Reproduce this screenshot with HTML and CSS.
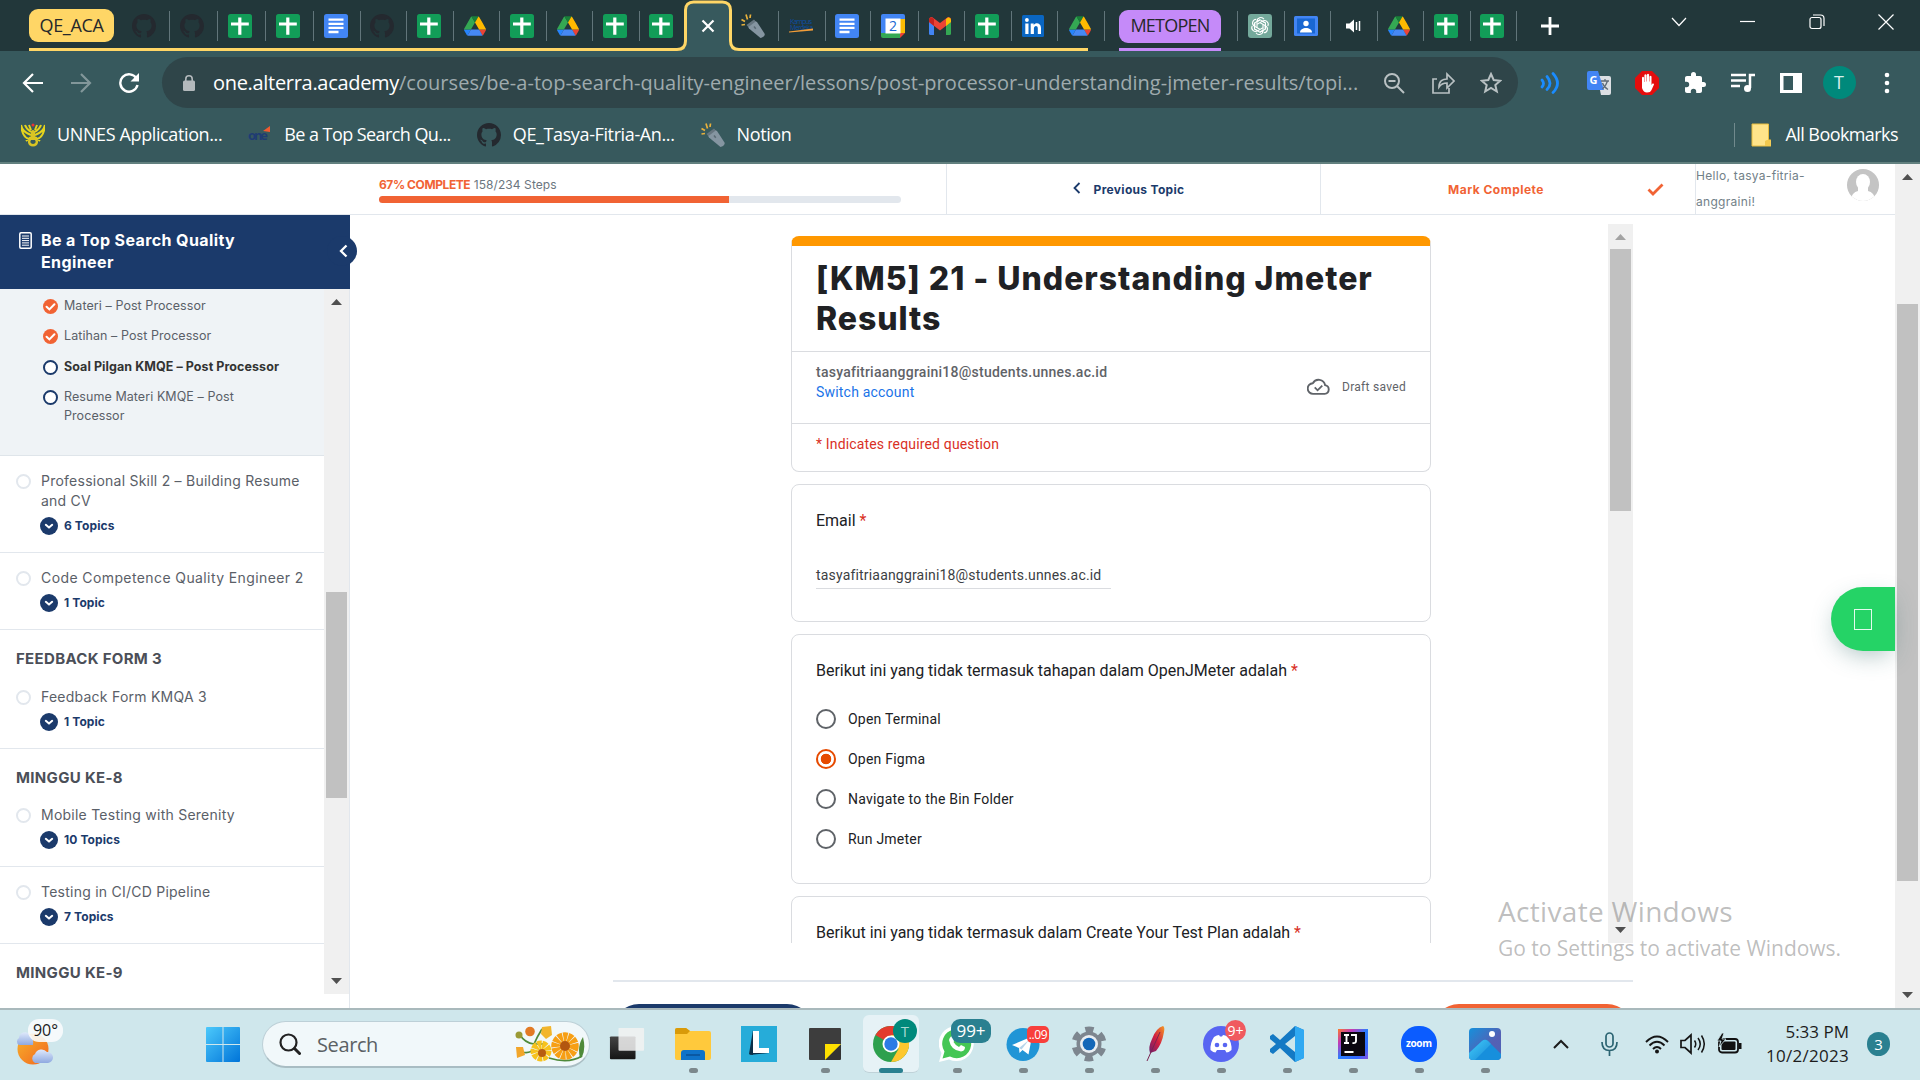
FILE: index.html
```html
<!DOCTYPE html>
<html lang="en">
<head>
<meta charset="utf-8">
<title>Be a Top Search Quality Engineer</title>
<link rel="stylesheet" href="styles.css">
</head>
<body>
<svg class="defs" aria-hidden="true">
  <symbol id="github" viewBox="0 0 16 16"><path fill="#24292f" d="M8 0C3.58 0 0 3.58 0 8c0 3.54 2.29 6.53 5.47 7.59.4.07.55-.17.55-.38 0-.19-.01-.82-.01-1.49-2.01.37-2.53-.49-2.69-.94-.09-.23-.48-.94-.82-1.13-.28-.15-.68-.52-.01-.53.63-.01 1.08.58 1.23.82.72 1.21 1.87.87 2.33.66.07-.52.28-.87.51-1.07-1.78-.2-3.64-.89-3.64-3.95 0-.87.31-1.59.82-2.15-.08-.2-.36-1.02.08-2.12 0 0 .67-.21 2.2.82.64-.18 1.32-.27 2-.27s1.36.09 2 .27c1.53-1.04 2.2-.82 2.2-.82.44 1.1.16 1.92.08 2.12.51.56.82 1.27.82 2.15 0 3.07-1.87 3.75-3.65 3.95.29.25.54.73.54 1.48 0 1.07-.01 1.93-.01 2.2 0 .21.15.46.55.38A8.01 8.01 0 0 0 16 8c0-4.42-3.58-8-8-8z"/></symbol>
  <symbol id="sheets" viewBox="0 0 24 24"><rect width="24" height="24" rx="2.500" fill="#129d58"/><path d="M10.200 3.500h3.200v5h7.400v3h-7.400v9.200h-3.200v-9.200H3v-3h7.200z" fill="#fff"/></symbol>
  <symbol id="docs" viewBox="0 0 24 24"><rect width="24" height="24" rx="2.500" fill="#4285f4"/><path d="M4.500 5.700h15M4.500 9.800h15M4.500 13.900h15M4.500 18h10" stroke="#fff" stroke-width="2.300"/></symbol>
  <symbol id="drive" viewBox="0 0 87.3 78"><path fill="#2684fc" d="M6.600 66.850l3.850 6.650c.8 1.400 1.950 2.500 3.300 3.300L27.500 53H0c0 1.550.4 3.100 1.200 4.500z"/><path fill="#34a853" d="M43.650 25L29.900 1.200c-1.350.8-2.500 1.900-3.300 3.300L1.200 48.500C.4 49.900 0 51.450 0 53h27.500z"/><path fill="#ea4335" d="M73.550 76.800c1.350-.8 2.500-1.900 3.300-3.300l1.600-2.750 7.650-13.250c.8-1.400 1.200-2.950 1.200-4.500H59.800l5.850 11.500z"/><path fill="#188038" d="M43.650 25L57.400 1.200C56.050.4 54.500 0 52.900 0H34.400c-1.600 0-3.150.45-4.500 1.200z"/><path fill="#4688f4" d="M59.800 53H27.500L13.750 76.800c1.350.8 2.900 1.200 4.500 1.200h50.800c1.600 0 3.150-.45 4.500-1.200z"/><path fill="#ffba00" d="M73.400 26.500l-12.700-22c-.8-1.400-1.950-2.500-3.300-3.300L43.650 25 59.800 53h27.450c0-1.550-.4-3.100-1.200-4.500z"/></symbol>
  <symbol id="torch" viewBox="0 0 24 24"><path d="M6.500 11.500L13 6.500l3 1.500 7.500 11.500c1 2-2 4.500-4 4.500L8 14.500z" fill="#8595a1"/><path d="M5.500 11L13 5.500l1.700 2L7.500 13z" fill="#66757f"/><path d="M13 12.500l1.800 2.300" stroke="#5b6b75" stroke-width="1.500"/><path d="M.5 5.500l3.500 2M5 .5l1.500 5M.5 11l3.500-.5M9.500.500L9 4" stroke="#e8b13c" stroke-width="1.700"/></symbol>
  <symbol id="check" viewBox="0 0 16 16"><circle cx="8" cy="8" r="8" fill="#f16334"/><path d="M3.800 8.300l3 2.800 5.400-5.400" fill="none" stroke="#fff" stroke-width="2.200" stroke-linecap="round"/></symbol>
  <symbol id="expand" viewBox="0 0 18 18"><circle cx="9" cy="9" r="9" fill="#1b3a6b"/><path d="M5.800 7.800L9 10.600l3.200-2.800" fill="none" stroke="#fff" stroke-width="2" stroke-linecap="round" stroke-linejoin="round"/></symbol>
  <symbol id="up" viewBox="0 0 11 6"><path d="M0 6L5.500 0 11 6z" fill="currentColor"/></symbol>
  <symbol id="down" viewBox="0 0 11 6"><path d="M0 0h11L5.500 6z" fill="currentColor"/></symbol>
</svg>

<div class="tabs">
  <div class="pill-cell"><span class="pill yellow">QE_ACA</span></div>
  <div class="tab"><svg class="i24"><use href="#github"/></svg></div>
  <div class="tab"><svg class="i24"><use href="#github"/></svg></div>
  <div class="tab"><svg class="i24"><use href="#sheets"/></svg></div>
  <div class="tab"><svg class="i24"><use href="#sheets"/></svg></div>
  <div class="tab"><svg class="i24"><use href="#docs"/></svg></div>
  <div class="tab"><svg class="i24"><use href="#github"/></svg></div>
  <div class="tab"><svg class="i24"><use href="#sheets"/></svg></div>
  <div class="tab"><svg class="i22"><use href="#drive"/></svg></div>
  <div class="tab"><svg class="i24"><use href="#sheets"/></svg></div>
  <div class="tab"><svg class="i22"><use href="#drive"/></svg></div>
  <div class="tab"><svg class="i24"><use href="#sheets"/></svg></div>
  <div class="tab plain"><svg class="i24"><use href="#sheets"/></svg></div>
  <div class="tab active">
    <svg class="outline" viewBox="0 0 69 51"><path d="M0 49.500h3c6 0 8.500-3 8.500-8.500V10c0-5 3-8 8-8h29c5 0 8 3 8 8v31c0 5.500 2.500 8.500 8.500 8.500h4V51H0z" fill="#37595d"/><path d="M0 49.500h3c6 0 8.500-3 8.500-8.500V10c0-5 3-8 8-8h29c5 0 8 3 8 8v31c0 5.500 2.500 8.500 8.500 8.500h4" fill="none" stroke="#ffd666" stroke-width="3"/><path d="M28.500 20.500l11 11M39.500 20.500l-11 11" stroke="#fff" stroke-width="2.200"/></svg>
  </div>
  <div class="tab"><svg class="i24"><use href="#torch"/></svg></div>
  <div class="tab"><svg class="i24" viewBox="0 0 24 24"><text x="1" y="10" font-size="7" textLength="22" fill="#0c4da2" class="brand">Kampus</text><text x="1" y="16" font-size="6.500" textLength="23" fill="#0c4da2" class="brand">Merdeka</text><path d="M0 17.500l24-3v2l-24 2z" fill="#f19c38"/></svg></div>
  <div class="tab"><svg class="i24"><use href="#docs"/></svg></div>
  <div class="tab"><svg class="i24" viewBox="0 0 24 24"><path d="M2 0h20q2 0 2 2v4H0V2q0-2 2-2z" fill="#4285f4"/><path d="M0 5h5v14H0z" fill="#4285f4"/><path d="M19 5h5v14h-5z" fill="#fbbc04"/><path d="M0 19h19v5H2q-2 0-2-2z" fill="#34a853"/><path d="M19 19h5l-5 5z" fill="#ea4335"/><path d="M4.500 4.500h15v15h-15z" fill="#fff"/><text x="12" y="17" font-size="14" text-anchor="middle" fill="#1a67d2" class="brand">2</text></svg></div>
  <div class="tab"><svg class="i22" viewBox="0 0 22 18"><path d="M0 3v13.500Q0 18 1.500 18H5V8z" fill="#4285f4"/><path d="M22 3v13.500q0 1.500-1.500 1.500H17V8z" fill="#34a853"/><path d="M0 3q0-3 3-3l8 6 8-6q3 0 3 3v2L11 13.500 0 5z" fill="#ea4335"/><path d="M0 3q0-3 3-2.500L5 2v7L0 5z" fill="#c5221f"/><path d="M22 3q0-3-3-2.500L17 2v7l5-4z" fill="#fbbc04"/></svg></div>
  <div class="tab"><svg class="i24"><use href="#sheets"/></svg></div>
  <div class="tab"><svg class="i22" viewBox="0 0 22 22"><rect width="22" height="22" rx="1.500" fill="#0a66c2"/><path d="M3.300 8.500h3.200V19H3.300zM8.700 8.500h3v1.400c2-2.800 7.300-2 7.300 3V19h-3.200v-5.500c0-3.500-3.900-3-3.900 0V19H8.700z" fill="#fff"/><circle cx="4.900" cy="5" r="1.900" fill="#fff"/></svg></div>
  <div class="tab"><svg class="i22"><use href="#drive"/></svg></div>
  <div class="tab pill-tab"><span class="pill purple">METOPEN</span></div>
  <div class="tab"><svg class="i24" viewBox="0 0 24 24"><rect width="24" height="24" rx="3" fill="#74a99b"/><g fill="none" stroke="#fff" stroke-width="1.100"><path id="petal" d="M9 13.500V7.500a3.800 3.800 0 0 1 7-2.200M9 7.800l3.200-2 5.300 3.100"/><use href="#petal" transform="rotate(60 12 12)"/><use href="#petal" transform="rotate(120 12 12)"/><use href="#petal" transform="rotate(180 12 12)"/><use href="#petal" transform="rotate(240 12 12)"/><use href="#petal" transform="rotate(300 12 12)"/></g></svg></div>
  <div class="tab"><svg class="i24" viewBox="0 0 24 24"><rect y="2" width="24" height="20" rx="1.500" fill="#4285f4"/><rect x="3" y="4.500" width="18" height="15" fill="#1967d2"/><circle cx="12" cy="9.500" r="2.700" fill="#fff"/><path d="M6 18.500c0-6 12-6 12 0z" fill="#fff"/></svg></div>
  <div class="tab"><svg class="i24" viewBox="0 0 24 24"><path d="M5 9.500h3.500L13 5.500v13l-4.500-4H5z" fill="#fff"/><path d="M15.500 8v8M18.500 7v10" stroke="#fff" stroke-width="1.500"/></svg></div>
  <div class="tab"><svg class="i22"><use href="#drive"/></svg></div>
  <div class="tab"><svg class="i24"><use href="#sheets"/></svg></div>
  <div class="tab"><svg class="i24"><use href="#sheets"/></svg></div>
  <div class="window-controls">
    <svg class="plus" viewBox="0 0 20 20"><path d="M10 1v18M1 10h18" stroke="#fff" stroke-width="2.800"/></svg>
    <svg viewBox="0 0 16 16"><path d="M1 4l7 7.500L15 4" fill="none" stroke="#fff" stroke-width="1.200"/></svg>
    <svg viewBox="0 0 16 16"><path d="M0 7.500h15" stroke="#fff" stroke-width="1.200"/></svg>
    <svg viewBox="0 0 16 16"><rect x="1" y="3.500" width="11" height="11" rx="2" fill="none" stroke="#fff" stroke-width="1.200"/><path d="M4 1h7.500c2 0 3.500 1.500 3.500 3.500V12" fill="none" stroke="#fff" stroke-width="1.200"/></svg>
    <svg viewBox="0 0 16 16"><path d="M.5.500l15 15M15.500.500l-15 15" stroke="#fff" stroke-width="1.200"/></svg>
  </div>
</div>

<div class="toolbar">
  <svg class="nav-icon" viewBox="0 0 22 22"><path d="M21 11H3M11 2l-9 9 9 9" fill="none" stroke="#fff" stroke-width="2.200"/></svg>
  <svg class="nav-icon" viewBox="0 0 22 22"><path d="M1 11h18M11 2l9 9-9 9" fill="none" stroke="#82979a" stroke-width="2.200"/></svg>
  <svg class="nav-icon" viewBox="0 0 22 22"><path d="M18.500 6.500A8.700 8.700 0 1 0 19.500 13" fill="none" stroke="#fff" stroke-width="2.400"/><path d="M21 1v8.500h-8.500z" fill="#fff"/></svg>
  <div class="omnibox">
    <svg class="lock" viewBox="0 0 12 16"><path d="M2.800 7V4a3.200 3.200 0 0 1 6.400 0v3" fill="none" stroke="#b4babd" stroke-width="1.600"/><rect y="5.500" width="12" height="10.500" rx="1.500" fill="#b4babd"/></svg>
    <span class="url"><span class="host">one.alterra.academy</span>/courses/be-a-top-search-quality-engineer/lessons/post-processor-understanding-jmeter-results/topi...</span>
    <svg class="i22" viewBox="0 0 22 22"><circle cx="9" cy="9" r="7" fill="none" stroke="#b9c1c3" stroke-width="2"/><path d="M14 14l7 7M5.500 9h7" stroke="#b9c1c3" stroke-width="2"/></svg>
    <svg class="i24" viewBox="0 0 24 24"><path d="M6 8H2v14h16v-5M8 16c0-6 4-8 8-8V3l7 7-7 7v-5c-4 0-6 1-8 4z" fill="none" stroke="#b9c1c3" stroke-width="1.700"/></svg>
    <svg class="i22" viewBox="0 0 22 22"><path d="M11 2l2.700 6 6.500.700-4.900 4.300 1.500 6.500L11 16l-5.800 3.500L6.700 13 1.800 8.700 8.300 8z" fill="none" stroke="#b9c1c3" stroke-width="2"/></svg>
  </div>
  <div class="extensions">
    <svg class="i24" viewBox="0 0 24 24"><path d="M3 9q3 3.500 0 7M8 5.500q6 7 0 13M14 2.500q9 10 0 19" fill="none" stroke="#1a8cff" stroke-width="2.700" stroke-linecap="round"/></svg>
    <svg class="i24" viewBox="0 0 24 24"><path d="M10 5h12q2 0 2 2v15q0 2-2 2h-8z" fill="#dcdfe3"/><path d="M2 0h9l6 19H2q-2 0-2-2V2q0-2 2-2z" fill="#4285f4"/><text x="2.500" y="13" font-size="11" font-weight="700" fill="#fff" class="brand">G</text><path d="M14 10h8M18 8v2M20.500 10c-1 4-3 6-5 8M15.500 12c1 3 3 5 5.500 6.500" stroke="#5f6b78" stroke-width="1.300" fill="none"/></svg>
    <svg class="i24" viewBox="0 0 24 24"><path d="M7 0h10l7 7v10l-7 7H7l-7-7V7z" fill="#e40d0d"/><path d="M7 13V6.500q1-1.500 2 0V11h.4V4q1-1.500 2.100 0v6.500h.4V3.500q1.100-1.500 2.200 0v7h.4V5.500q1-1.500 2 0V14l1-1.500q1.500-.5 1.500 1L16.500 19q-1 2.500-4.500 2.500T7 17z" fill="#fff"/></svg>
    <svg class="i24" viewBox="0 0 24 24"><path fill="#fff" d="M20.500 11H19V7c0-1.100-.9-2-2-2h-4V3.500a2.500 2.500 0 0 0-5 0V5H4c-1.100 0-2 .9-2 2v3.800h1.500a2.700 2.700 0 0 1 0 5.400H2V20c0 1.100.9 2 2 2h3.800v-1.500a2.700 2.700 0 0 1 5.400 0V22H17c1.100 0 2-.9 2-2v-4h1.500a2.500 2.500 0 0 0 0-5z"/></svg>
    <svg class="i24" viewBox="0 0 24 24"><path d="M0 4h15M0 9.500h15M0 15h9" stroke="#fff" stroke-width="2.300"/><path d="M24 4h-5v13" stroke="#fff" stroke-width="2.500" fill="none"/><circle cx="16.500" cy="17.500" r="3.500" fill="#fff"/></svg>
    <svg class="i24" viewBox="0 0 24 24"><path d="M1 2h22v20H1zM4.500 5v14H14V5z" fill="#fff" fill-rule="evenodd"/></svg>
    <span class="avatar">T</span>
    <svg class="i24" viewBox="0 0 24 24"><circle cx="12" cy="4" r="2.300" fill="#fff"/><circle cx="12" cy="12" r="2.300" fill="#fff"/><circle cx="12" cy="20" r="2.300" fill="#fff"/></svg>
  </div>
</div>

<div class="bookmarks">
  <svg class="i24" viewBox="0 0 24 24"><path d="M10 12C4 10 1 7 0 2c1 10 4 13 8 14M14 12c6-2 9-5 10-10-1 10-4 13-8 14M10 9C7 7 5 5 4 2M14 9c3-2 5-4 6-7M10 14l-5 4M14 14l5 4M10 7L8 2M14 7l2-5" fill="none" stroke="#e5d31c" stroke-width="2"/><path d="M10 8q2-2 4 0v6q5 3 2 8-4 3-8 0-3-5 2-8z" fill="#d9c424"/><path d="M10 17q-2 3 2 4 4-1 2-4z" fill="#37595d"/><circle cx="12" cy="2" r="1.500" fill="#e33"/></svg>
  <span class="bm">UNNES Application...</span>
  <svg class="i24 one" viewBox="0 0 24 24"><text x="0" y="16.500" font-size="13" font-weight="700" textLength="20" fill="#1f3c73" class="brand">one</text><path d="M15 8l7-5v6z" fill="#ef5b30"/></svg>
  <span class="bm tighter">Be a Top Search Qu...</span>
  <svg class="i24"><use href="#github"/></svg>
  <span class="bm">QE_Tasya-Fitria-An...</span>
  <svg class="i24"><use href="#torch"/></svg>
  <span class="bm">Notion</span>
  <div class="all">
    <svg viewBox="0 0 20 24"><path d="M1 1h16.500v16H20v6H1z" fill="#ffe48a" stroke="#e8bd3f"/><path d="M14 23v-5q3-2 5.500-1V23z" fill="#f3c94e"/></svg>
    <span class="bm tighter">All Bookmarks</span>
  </div>
</div>

<div class="page">
  <div class="site">
    <header class="topbar">
      <div class="progress">
        <div class="progress-text"><b>67% COMPLETE</b> <span>158/234 Steps</span></div>
        <div class="track"><div class="fill"></div></div>
      </div>
      <div class="prev"><svg viewBox="0 0 8 12"><path d="M6.500 1l-5 5 5 5" fill="none" stroke="#1b3a6b" stroke-width="1.800"/></svg><b>Previous Topic</b></div>
      <div class="mark"><b>Mark Complete</b><svg viewBox="0 0 17 13"><path d="M1.500 6.500l4.500 4.500L15.500 1.500" fill="none" stroke="#f16334" stroke-width="2.800"/></svg></div>
      <div class="user"><span class="hello">Hello, tasya-fitria-<br>anggraini!</span>
        <svg viewBox="0 0 32 32"><clipPath id="round"><circle cx="16" cy="16" r="16"/></clipPath><g clip-path="url(#round)"><path d="M0 0h32v32H0z" fill="#c4c4c4"/><ellipse cx="16" cy="13" rx="7" ry="8" fill="#fff"/><path d="M11 17h10v5q6 1 8 10H3q2-9 8-10z" fill="#fff"/></g></svg>
      </div>
    </header>
    <div class="body">
      <aside class="sidebar">
        <div class="course">
          <svg class="doc" viewBox="0 0 13 17"><rect x=".8" y=".8" width="11.400" height="15.400" rx="1.200" fill="none" stroke="#fff" stroke-width="1.500"/><path d="M3 4h7M3 6.300h7M3 8.600h7M3 10.900h7M3 13.200h7" stroke="#fff" stroke-width="1"/></svg>
          <b>Be a Top Search Quality<br>Engineer</b>
          <span class="toggle"><svg viewBox="0 0 9 14"><path d="M7.500 1.500L2 7l5.500 5.500" fill="none" stroke="#fff" stroke-width="2.300"/></svg></span>
        </div>
        <div class="scroller">
          <div class="list">
            <div class="topics">
              <div class="topic"><svg class="i15"><use href="#check"/></svg><span>Materi – Post Processor</span></div>
              <div class="topic"><svg class="i15"><use href="#check"/></svg><span>Latihan – Post Processor</span></div>
              <div class="topic current"><i class="ring navy"></i><span>Soal Pilgan KMQE – Post Processor</span></div>
              <div class="topic"><i class="ring navy"></i><span>Resume Materi KMQE – Post<br>Processor</span></div>
            </div>
            <div class="lesson"><i class="ring"></i><div class="name">Professional Skill 2 – Building Resume<br>and CV</div><svg class="i18"><use href="#expand"/></svg><b>6 Topics</b></div>
            <div class="lesson"><i class="ring"></i><div class="name wide">Code Competence Quality Engineer 2</div><svg class="i18"><use href="#expand"/></svg><b>1 Topic</b></div>
            <h3>FEEDBACK FORM 3</h3>
            <div class="lesson"><i class="ring"></i><div class="name">Feedback Form KMQA 3</div><svg class="i18"><use href="#expand"/></svg><b>1 Topic</b></div>
            <h3>MINGGU KE-8</h3>
            <div class="lesson"><i class="ring"></i><div class="name">Mobile Testing with Serenity</div><svg class="i18"><use href="#expand"/></svg><b>10 Topics</b></div>
            <div class="lesson"><i class="ring"></i><div class="name">Testing in CI/CD Pipeline</div><svg class="i18"><use href="#expand"/></svg><b>7 Topics</b></div>
            <h3>MINGGU KE-9</h3>
          </div>
          <div class="bar side-bar"><svg class="arrow"><use href="#up"/></svg><div class="thumb"></div><svg class="arrow end"><use href="#down"/></svg></div>
        </div>
      </aside>
      <main>
        <div class="embed">
          <div class="form">
            <section class="card intro">
              <h1>[KM5] 21 - Understanding Jmeter<br>Results</h1>
              <div class="account"><div><b>tasyafitriaanggraini18@students.unnes.ac.id</b><br><a>Switch account</a></div>
                <svg viewBox="0 0 24 18"><path d="M19 7.500A7 7 0 0 0 6 5.500 5.500 5.500 0 0 0 6.500 16.800H18.500a4.700 4.700 0 0 0 .5-9.300z" fill="none" stroke="#5f6368" stroke-width="2"/><path d="M8 10l3 3 5-5" fill="none" stroke="#5f6368" stroke-width="1.900"/></svg>
                <span class="draft">Draft saved</span></div>
              <p class="required">* Indicates required question</p>
            </section>
            <section class="card email">
              <p class="q">Email <em>*</em></p>
              <div class="input">tasyafitriaanggraini18@students.unnes.ac.id</div>
            </section>
            <section class="card choice">
              <p class="q">Berikut ini yang tidak termasuk tahapan dalam OpenJMeter adalah <em>*</em></p>
              <div class="opt"><i></i>Open Terminal</div>
              <div class="opt on"><i></i>Open Figma</div>
              <div class="opt"><i></i>Navigate to the Bin Folder</div>
              <div class="opt"><i></i>Run Jmeter</div>
            </section>
            <section class="card choice">
              <p class="q">Berikut ini yang tidak termasuk dalam Create Your Test Plan adalah <em>*</em></p>
            </section>
          </div>
          <div class="bar form-bar"><svg class="arrow faint"><use href="#up"/></svg><div class="thumb"></div><svg class="arrow end"><use href="#down"/></svg></div>
        </div>
        <div class="actions"><span class="btn"></span><span class="btn orange"></span></div>
      </main>
    </div>
    <div class="chat"><i></i></div>
  </div>
  <div class="bar page-bar"><svg class="arrow"><use href="#up"/></svg><div class="thumb"></div><svg class="arrow end"><use href="#down"/></svg></div>
  <div class="watermark"><span class="big">Activate Windows</span><br>Go to Settings to activate Windows.</div>
</div>

<div class="taskbar">
  <div class="weather"><svg viewBox="0 0 38 42"><defs><linearGradient id="sun" x2="1" y2="1"><stop stop-color="#f7b32b"/><stop offset="1" stop-color="#f2661f"/></linearGradient><linearGradient id="cl" x2="0" y2="1"><stop stop-color="#dfe9fb"/><stop offset="1" stop-color="#8fa9e0"/></linearGradient></defs><circle cx="18" cy="24" r="15.500" fill="url(#sun)"/><path d="M4 20a4 4 0 0 1 0-7 6 6 0 0 1 11-3q4 3 3 10z" fill="url(#cl)"/><path d="M20 38a5 5 0 0 1 0-9 7 7 0 0 1 12-2 5.500 5.500 0 0 1 1 11z" fill="url(#cl)"/></svg><span>90°</span></div>
  <svg class="start" viewBox="0 0 34 35"><defs><linearGradient id="win" gradientUnits="userSpaceOnUse" x1="0" y1="0" x2="34" y2="35"><stop stop-color="#4cc9fb"/><stop offset="1" stop-color="#0074d9"/></linearGradient></defs><path d="M1 0h15.500v17H0V1q0-1 1-1zM17.500 0H33q1 0 1 1v16H17.500zM0 18h16.500v17H1q-1 0-1-1zM17.500 18H34v16q0 1-1 1H17.500z" fill="url(#win)"/></svg>
  <div class="search">
    <svg class="i22" viewBox="0 0 22 22"><circle cx="9.500" cy="9.500" r="8" fill="none" stroke="#222" stroke-width="2.200"/><path d="M15.500 15.500l5 5" stroke="#222" stroke-width="3" stroke-linecap="round"/></svg>
    <span>Search</span>
    <svg class="flowers" viewBox="0 0 70 36"><path d="M5 9q5 8 14 9M20 18h8M27 3q-5 8-8 15M6 26q10 2 12-3M34 32q20 6 33-2" fill="none" stroke="#4f8a3a" stroke-width="1.700"/><path d="M65 32q-3-12 3-21 3 12-1 20z" fill="#4f8a3a"/><circle cx="4" cy="9" r="3.500" fill="#9a9a35"/><circle cx="15" cy="5.500" r="4.800" fill="#e27a25"/><path d="M27 1l9-1 1 9-6 4-5-5z" fill="#f2b52c"/><path d="M1 21l7 0 2 8-8 3z" fill="#f2a62a"/><circle cx="26" cy="25" r="6" fill="none" stroke="#f7c21d" stroke-width="9" stroke-dasharray="3.500 .6"/><circle cx="27" cy="27" r="4" fill="#b85e12"/><circle cx="50" cy="20" r="9" fill="none" stroke="#f79f14" stroke-width="9.500" stroke-dasharray="3.900 .6"/><circle cx="50" cy="20" r="5" fill="#b3560f"/></svg>
  </div>
  <div class="apps">
    <div class="app nodot"><svg viewBox="0 0 38 36"><defs><linearGradient id="blk" x2="0" y2="1"><stop stop-color="#444"/><stop offset="1" stop-color="#151515"/></linearGradient></defs><rect x="1" y="10" width="27" height="24" rx="1" fill="url(#blk)"/><rect x="10" y="1" width="27" height="24" rx="1" fill="#f2f2f2" opacity=".85"/></svg></div>
    <div class="app"><svg viewBox="0 0 36 36"><path d="M0 4q0-2 2-2h9l4 3h19q2 0 2 2v25q0 2-2 2H2q-2 0-2-2z" fill="#ffc93c"/><path d="M0 4q0-2 2-2h9l4 3-3 3H0z" fill="#d99a09"/><path d="M6 34V27q0-3 3-3h18q3 0 3 3v7z" fill="#0f73c9"/><path d="M11 29h14" stroke="#0a4f94" stroke-width="1.500"/></svg></div>
    <div class="app nodot"><svg viewBox="0 0 36 36"><path d="M0 0h36v36H0z" fill="#26acd9"/><path d="M12 4l-4 24 4 1z" fill="#0b3049"/><path d="M8 29l5-3h15v1z" fill="#0b3049"/><path d="M12 5h6v17h10v5H12z" fill="#fff"/></svg></div>
    <div class="app"><svg viewBox="0 0 36 36"><path d="M2 3q0-1 1-1h30q1 0 1 1v15L19 34H3q-1 0-1-1z" fill="#3d3d3d"/><path d="M34 18v15q0 1-1 1H18z" fill="#333"/><path d="M18 18h16L18 34z" fill="#ffe100"/></svg></div>
    <div class="app current"><svg viewBox="0 0 36 36"><circle cx="18" cy="18" r="18" fill="#2da04e"/><path d="M18 18L2.400 9A18 18 0 0 1 33.600 9H18z" fill="#e33b2e"/><path d="M18 36A18 18 0 0 0 33.600 9H18l7.500 14z" fill="#fdc72e"/><circle cx="18" cy="18" r="8.500" fill="#fff"/><circle cx="18" cy="18" r="6.700" fill="#2c7be5"/></svg><span class="badge t">T</span></div>
    <div class="app"><svg viewBox="0 0 36 36"><path d="M0 36l2.500-9A17.500 17.500 0 1 1 10 33.500z" fill="#fff"/><path d="M3.500 32.500l2-7A14.500 14.500 0 1 1 11 30.500z" fill="#45c654"/><path d="M12 10.500q2-1 3 1l1 2.500-1.500 2q2 3.500 5.500 5l2-2 4 2q0 4-4 4.500Q12 24.500 10 14q.5-2.500 2-3.500z" fill="#fff"/></svg><span class="badge wa">99+</span></div>
    <div class="app"><svg viewBox="0 0 36 36"><circle cx="18" cy="18.500" r="16.500" fill="#2095d6"/><path d="M7 19l20-8.500-3.500 18-6-4.500-3 3-.5-5z" fill="#fff"/><path d="M14 22l10-8-7.500 9.500z" fill="#b5d4ea"/></svg><span class="badge tg">..09</span></div>
    <div class="app"><svg viewBox="0 0 36 36"><circle cx="18" cy="18" r="12.500" fill="#7d868f"/><circle cx="18" cy="18" r="14.500" fill="none" stroke="#7d868f" stroke-width="6" stroke-dasharray="8 7.180" stroke-dashoffset="4" transform="rotate(30 18 18)"/><circle cx="18" cy="18" r="9" fill="#e9eef2"/><circle cx="18" cy="18" r="6.300" fill="#1467b8"/></svg></div>
    <div class="app"><svg viewBox="0 0 36 36"><defs><linearGradient id="fe" x1="1" x2="0" y2="1"><stop stop-color="#f59a23"/><stop offset=".5" stop-color="#d22040"/><stop offset="1" stop-color="#6c2170"/></linearGradient></defs><path d="M26 0q2 1 1 6-2 12-8 19l-6 2q-2-6 2-14Q19 2 26 0z" fill="url(#fe)"/><path d="M23 6L10 35" stroke="#7a2450" stroke-width="1"/></svg></div>
    <div class="app"><svg viewBox="0 0 36 36"><circle cx="18" cy="18" r="18" fill="#5865f2"/><path d="M11 11q3-2 5-2l1 1.500h2L20 9q2 0 5 2 4 6 3.500 13-3 2.500-5 2.500L22 24h-8l-1.500 2.500q-2 0-5-2.500Q7 17 11 11z" fill="#fff"/><circle cx="14" cy="19" r="2.300" fill="#5865f2"/><circle cx="22" cy="19" r="2.300" fill="#5865f2"/></svg><span class="badge dc">9+</span></div>
    <div class="app"><svg viewBox="0 0 36 36"><path d="M26 0l9 4v28l-9 4-15-14-7 6-3-2v-3l6-5-6-5v-3l3-2 7 6zM26 10l-10 8 10 8z" fill="#1479c4" fill-rule="evenodd"/><path d="M26 0l9 4v28l-9 4z" fill="#30a9f2"/></svg></div>
    <div class="app"><svg viewBox="0 0 36 36"><defs><linearGradient id="ij" x2="1" y2="1"><stop stop-color="#ff7a2a"/><stop offset=".25" stop-color="#c03bb8"/><stop offset=".5" stop-color="#2a7dff"/><stop offset=".8" stop-color="#3266ff"/><stop offset="1" stop-color="#8a52e0"/></linearGradient></defs><path d="M3 3h30v30H3z" fill="url(#ij)"/><path d="M6 6h24v24H6z" fill="#0b0710"/><path d="M9 9h5M11.500 9v8M9 17h5M16 9h5v6q0 2.500-3.500 2M9.500 26h9" fill="none" stroke="#fff" stroke-width="1.900"/></svg></div>
    <div class="app"><svg viewBox="0 0 36 36"><rect width="36" height="36" rx="17" fill="#0b5cff"/><text x="5" y="21" font-size="10" font-weight="700" textLength="26" fill="#fff" class="brand">zoom</text></svg></div>
    <div class="app"><svg viewBox="0 0 36 36"><defs><linearGradient id="ph" x2="1" y2="1"><stop stop-color="#1591dc"/><stop offset=".6" stop-color="#5560b4"/><stop offset="1" stop-color="#4b63b8"/></linearGradient><linearGradient id="mt" x2="1" y2="1"><stop stop-color="#43cdf8"/><stop offset="1" stop-color="#1787d8"/></linearGradient></defs><rect x="2" y="2" width="32" height="32" rx="4" fill="url(#ph)"/><path d="M2 27l13-12q3-2.500 6 0l13 13v2q0 4-4 4H6q-4 0-4-4z" fill="#178fdc"/><path d="M2 27l13-12q3-2.500 6 0l3 3L8 34H6q-4 0-4-4z" fill="url(#mt)"/><circle cx="25" cy="8" r="3" fill="#fff"/></svg></div>
  </div>
  <div class="tray">
    <svg class="chev" viewBox="0 0 16 10"><path d="M1 9l7-7 7 7" fill="none" stroke="#1c1c1c" stroke-width="2"/></svg>
    <svg class="mic" viewBox="0 0 17 24"><rect x="5" y="1" width="7" height="14" rx="3.500" fill="none" stroke="#2b6472" stroke-width="1.700"/><path d="M1 10q0 8.500 7.500 8.500T16 10M8.500 18.500V24" fill="none" stroke="#2b6472" stroke-width="1.700"/></svg>
    <svg class="wifi" viewBox="0 0 24 20"><path d="M1 8q11-11 22 0M4.500 11.500q7.500-7.500 15 0M8 15q4-4 8 0" fill="none" stroke="#151515" stroke-width="1.900"/><circle cx="12" cy="17.500" r="2" fill="#151515"/></svg>
    <svg class="vol" viewBox="0 0 25 22"><path d="M1 7.500h4l6-5.500v18l-6-5.500H1z" fill="none" stroke="#151515" stroke-width="1.700"/><path d="M14.500 7.500q2.500 3.500 0 7M18 5q4.500 6 0 12M21.500 2.500q5.500 8.500 0 17" fill="none" stroke="#151515" stroke-width="1.500"/></svg>
    <svg class="batt" viewBox="0 0 25 20"><rect x="2" y="5" width="19" height="13.500" rx="3" fill="none" stroke="#111" stroke-width="1.800"/><rect x="4.500" y="7.500" width="14" height="8.500" rx="1" fill="#111"/><path d="M21.500 9h3v6h-3z" fill="#111"/><path d="M5-1L0 7h4l-2 6 7-8H5l2-6z" fill="#111" stroke="#cfe7ec" stroke-width=".8"/></svg>
    <div class="clock">5:33 PM<br><span>10/2/2023</span></div>
    <span class="count">3</span>
  </div>
</div>
</body>
</html>
```
FILE: styles.css
```css
* { box-sizing: border-box; }
html, body { height: 100%; }
body {
  margin: 0;
  display: flex;
  flex-direction: column;
  overflow: hidden;
  background: #fff;
  font-family: "Open Sans", "Noto Sans", sans-serif;
}
.defs { position: absolute; width: 0; height: 0; }
svg { display: block; flex: none; }
.brand { font-family: "Open Sans", sans-serif; letter-spacing: 0; }
.i24 { width: 24px; height: 24px; }
.i22 { width: 22px; height: 22px; }
.i18 { width: 18px; height: 18px; }
.i15 { width: 15px; height: 15px; }

/* Tab strip */
.tabs {
  flex: none;
  height: 51px;
  display: grid;
  grid-template-columns: 121px 49px 48px 48px 48px 47px 46px 47px 46px 47px 46px 47px 46px 45px 48px 47px 45px 48px 46px 47px 46px 47px 133px 47px 46px 47px 46px 47px 46px 1fr;
  background:
    linear-gradient(#ffd666, #ffd666) 29px 48px / 1059px 3px no-repeat,
    linear-gradient(#c58af9, #c58af9) 1119px 48px / 102px 3px no-repeat,
    #22373a;
}
.tab {
  position: relative;
  height: 30px;
  margin-top: 11px;
  display: flex;
  align-items: center;
  justify-content: center;
  border-right: 1px solid #61757a;
  padding-right: 3px;
}
.tab.plain { border-color: transparent; }
.tab.active { border: 0; padding: 0; }
.outline { position: absolute; left: -12px; top: -11px; width: 69px; height: 51px; }
.pill-cell { padding: 9px 0 0 29px; }
.tab.pill-tab { padding-right: 2px; }
.pill {
  height: 33px;
  display: flex;
  align-items: center;
  justify-content: center;
  border-radius: 9px;
  padding-bottom: 2px;
  font-size: 18px;
  color: #26282b;
}
.yellow { width: 85px; background: #ffd666; letter-spacing: -.35px; }
.purple { width: 102px; background: #c58af9; letter-spacing: -.75px; }
.window-controls {
  display: flex;
  align-items: center;
  justify-content: space-between;
  padding: 0 26px 8px 23px;
}
.window-controls svg { width: 16px; height: 16px; }
.window-controls .plus { width: 20px; height: 20px; margin: 8px 58px 0 0; }

/* Toolbar */
.toolbar {
  flex: none;
  height: 63px;
  background: #37595d;
  display: flex;
  align-items: center;
  padding: 0 9px 0 22px;
}
.nav-icon { width: 22px; height: 22px; margin-right: 26px; }
.omnibox {
  flex: none;
  width: 1356px;
  height: 51px;
  margin-left: -4px;
  border-radius: 26px;
  background: #2f4549;
  display: flex;
  align-items: center;
  padding: 0 16px 0 21px;
}
.lock { width: 12px; height: 16px; margin-right: 18px; }
.url { flex: 1; font-size: 20px; color: #9fabae; white-space: nowrap; letter-spacing: .035px; }
.host { color: #fff; letter-spacing: -.307px; }
.omnibox .i24 { margin: 0 25px 0 26px; }
.extensions {
  width: 384px;
  margin-left: auto;
  display: grid;
  grid-template-columns: repeat(8, 48px);
  align-items: center;
  justify-items: center;
}
.avatar {
  width: 33px; height: 33px; border-radius: 50%;
  background: #00897b; color: #d8efec;
  font-size: 18px; line-height: 33px; text-align: center;
}

/* Bookmarks */
.bookmarks {
  flex: none;
  height: 50px;
  background: #37595d;
  border-bottom: 2px solid #62807f;
  display: flex;
  align-items: center;
  padding: 0 22px 6px 21px;
  color: #fff;
  font-size: 18px;
  white-space: nowrap;
}
.bm { margin: 0 26px 0 12px; letter-spacing: -.38px; position: relative; top: -1px; }
.bm.tighter { letter-spacing: -.57px; }
.all {
  margin-left: auto;
  height: 24px;
  border-left: 1px solid #718a8d;
  padding-left: 16px;
  display: flex;
  align-items: center;
}
.all svg { width: 20px; height: 24px; }
.all .bm { margin: 0 0 0 14px; }

/* Page */
.page { position: relative; flex: none; height: 844px; display: flex; overflow: hidden; }
.site { position: relative; flex: 1; min-width: 0; display: flex; flex-direction: column; font-family: Inter, sans-serif; }
.topbar {
  flex: none;
  height: 51px;
  display: grid;
  grid-template-columns: 946px 374px 375px 1fr;
  border-bottom: 1px solid #e2e7ed;
  font-size: 12px;
}
.progress { padding: 13px 45px 0 379px; }
.progress-text { height: 19px; line-height: 15px; color: #6b7680; white-space: nowrap; letter-spacing: .08px; }
.progress-text b { color: #f16334; font-weight: 700; letter-spacing: -.42px; }
.track { height: 7px; border-radius: 4px; background: #e2e7ed; }
.fill { width: 67%; height: 7px; border-radius: 4px 0 0 4px; background: #f16334; }
.prev, .mark { display: flex; align-items: center; border-left: 1px solid #e2e7ed; white-space: nowrap; }
.prev { justify-content: center; color: #1b3a6b; gap: 13px; padding-right: 10px; letter-spacing: .32px; }
.prev svg { width: 8px; height: 12px; margin-top: -3px; }
.mark { color: #f16334; padding: 0 31px 0 127px; justify-content: space-between; letter-spacing: .49px; }
.mark svg { width: 17px; height: 13px; }
.user { border-left: 1px solid #e2e7ed; display: flex; justify-content: space-between; padding-right: 16px; }
.user svg { width: 32px; height: 32px; margin-top: 5px; }
.hello { font-size: 12px; line-height: 26px; margin-top: -1px; color: #728188; white-space: nowrap; letter-spacing: .3px; }

.body { flex: 1; min-height: 0; display: flex; }
.sidebar { flex: none; width: 350px; border-right: 1px solid #e2e7ed; display: flex; flex-direction: column; }
.course {
  position: relative;
  flex: none;
  width: 350px;
  height: 74px;
  padding: 14px 0 0 19px;
  display: flex;
  gap: 9px;
  background: #1b3a6b;
  color: #fff;
  font-size: 16px;
  line-height: 22px;
  letter-spacing: .39px;
  white-space: nowrap;
}
.doc { width: 13px; height: 17px; margin-top: 3px; }
.toggle {
  position: absolute; left: 327px; top: 21px;
  width: 30px; height: 30px; border-radius: 50%;
  background: #1b3a6b;
  display: flex; align-items: center; padding-left: 12px;
}
.toggle svg { width: 9px; height: 14px; }
.scroller { flex: none; height: 705px; display: flex; }
.list { width: 324px; overflow: hidden; color: #5a6068; }
.topics { height: 167px; background: #eff3f6; border-bottom: 1px solid #dfe5ea; padding: 7px 0 0 43px; font-size: 12.5px; line-height: 19px; letter-spacing: .07px; }
.topic { display: flex; gap: 6px; padding-bottom: 11.300px; white-space: nowrap; }
.topic svg, .topic .ring { margin-top: 3px; }
.topic.current { color: #333; font-weight: 700; }
.ring { flex: none; width: 15px; height: 15px; border: 2px solid #e2e7ed; border-radius: 50%; background: #fff; }
.ring.navy { border-color: #1b3a6b; }
.lesson {
  display: grid;
  grid-template-columns: 24px 24px 1fr;
  align-items: start;
  height: 77px;
  padding: 15px 0 0 16px;
  border-bottom: 1px solid #e2e7ed;
  font-size: 14px;
  line-height: 20px;
  letter-spacing: .24px;
  white-space: nowrap;
  align-content: start;
}
.topics + .lesson { height: 97px; }
.lesson .ring { margin-top: 3px; }
.name { grid-column: 2 / 4; padding-left: 1px; }
.name.wide { letter-spacing: .4px; }
.lesson svg { grid-column: 2; margin-top: 6px; }
.lesson b { font-size: 12px; color: #1b3a6b; margin-top: 5px; letter-spacing: .1px; }
h3 { margin: 0; height: 41.500px; padding: 18px 0 0 16px; font-size: 15px; line-height: 22px; letter-spacing: .32px; color: #4b4f58; white-space: nowrap; }

/* Scrollbars */
.bar { flex: none; width: 25px; background: #f0f0f0; color: #505050; display: flex; flex-direction: column; align-items: center; padding: 10px 0; }
.arrow { width: 11px; height: 6px; }
.arrow.end { margin-top: auto; }
.arrow.faint { color: #a3a3a3; }
.thumb { width: 21px; background: #c1c1c1; }
.side-bar .thumb { height: 206px; margin-top: 287px; }
.form-bar .thumb { height: 262px; margin-top: 9px; }
.page-bar .thumb { height: 577px; margin-top: 124px; }

/* Embedded form */
main { flex: 1; padding: 9px 0 0 263px; }
.embed { width: 1020px; height: 719px; display: flex; justify-content: flex-end; overflow: hidden; font-family: Roboto, sans-serif; color: #202124; }
.form { width: 640px; margin-right: 177px; padding-top: 12px; display: flex; flex-direction: column; gap: 12px; }
.card { flex: none; border: 1px solid #dadce0; border-radius: 8px; font-size: 14px; letter-spacing: .2px; white-space: nowrap; }
.intro { height: 236px; border-top: 10px solid #ff9800; }
.intro h1 { margin: 0; height: 106px; padding: 13px 24px 0; font: 800 32px/40px Inter, sans-serif; letter-spacing: .97px; border-bottom: 1px solid #dadce0; }
.account { height: 72px; padding: 10px 24px 0; display: flex; line-height: 20px; color: #5f6368; border-bottom: 1px solid #dadce0; }
.account b { font-weight: 500; letter-spacing: .25px; }
.account a { color: #1a73e8; }
.account svg { width: 23px; height: 17px; margin: 16px 12px 0 auto; }
.draft { font-size: 12px; margin-top: 15px; letter-spacing: .29px; }
.required { margin: 0; padding: 10px 24px; line-height: 20px; letter-spacing: .155px; color: #d93025; }
.email { height: 138px; padding: 24px; }
.choice { height: 250px; padding: 24px; }
.q { margin: 0; font-size: 16px; line-height: 24px; letter-spacing: -.02px; }
.q em { color: #d93025; font-style: normal; }
.input { width: 295px; height: 32px; margin-top: 24px; padding-top: 8px; line-height: 20px; letter-spacing: .18px; color: #3c4043; border-bottom: 1px solid #dadce0; }
.opt { height: 40px; display: flex; align-items: center; gap: 12px; letter-spacing: .22px; }
.q + .opt { margin-top: 16px; }
.opt i { width: 20px; height: 20px; border: 2px solid #5f6368; border-radius: 50%; }
.opt.on i { border-color: #e64a00; background: radial-gradient(circle, #e64a00 5px, #fff 5.600px); }
.actions { width: 1020px; margin-top: 37px; padding-top: 22px; border-top: 2px solid #e2e7ed; display: flex; justify-content: space-between; }
.btn { width: 200px; height: 52px; border-radius: 26px; background: #1b3a6b; }
.btn.orange { background: #f16334; }

.chat {
  position: absolute; right: 0; top: 423px;
  width: 64px; height: 64px;
  border-radius: 32px 0 0 32px;
  background: #25d366;
  box-shadow: 0 8px 25px -5px rgba(45, 100, 100, .4);
  display: flex; align-items: center; padding-left: 23px;
}
.chat i { width: 18px; height: 21px; border: 1px solid #e4fbee; }
.watermark {
  position: absolute; left: 1498px; top: 730px;
  color: rgba(110, 110, 110, .45);
  font-size: 21px; line-height: 34px; white-space: nowrap; letter-spacing: -.03px;
}
.big { font-size: 28px; letter-spacing: .32px; }

/* Taskbar */
.taskbar { position: relative; flex: none; height: 72px; background: #cfe7ec; border-top: 2px solid #a9b9bc; display: flex; color: #1c1c1c; }
.weather { position: relative; width: 206px; padding: 15px 0 0 15px; }
.weather svg { width: 38px; height: 42px; }
.weather span {
  position: absolute; left: 28px; top: 9px;
  width: 35px; height: 23px; border-radius: 11px;
  background: rgba(250, 252, 253, .88);
  font-size: 16px; line-height: 23px; text-align: center;
}
.start { width: 34px; height: 35px; margin-top: 17px; }
.search {
  width: 328px; height: 47px; margin: 11px 4px 0 22px;
  border: 1px solid #bdd0d7; border-bottom: 2px solid #a9bdc3; border-radius: 24px;
  background: #f1f8fa;
  display: flex; align-items: center; padding: 0 4px 0 16px;
  font-size: 20px; color: #5b6164; letter-spacing: -.39px;
}
.search > span { margin: 0 auto 0 16px; }
.flowers { width: 70px; height: 36px; }
.apps { display: flex; }
.app { position: relative; width: 66px; padding: 16px 15px 0; }
.app svg { position: relative; width: 36px; height: 36px; }
.app::after { content: ""; position: absolute; left: 29px; top: 58px; width: 9px; height: 5px; border-radius: 3px; background: #7c888c; }
.app.nodot::after { display: none; }
.app.current::before { content: ""; position: absolute; left: 5px; top: 5px; width: 56px; height: 57px; border-radius: 6px; background: #e6f2f6; border-bottom: 1px solid #bfd2d8; }
.app.current::after { left: 21px; width: 24px; background: #2a8090; }
.badge { position: absolute; color: #fff; text-align: center; font-size: 15px; line-height: 24px; height: 24px; border-radius: 12px; }
.badge.t { left: 35px; top: 9px; width: 24px; background: #00897b; color: #a9d8d2; }
.badge.wa { left: 27px; top: 9px; width: 40px; border-radius: 9px; background: #2a8090; font-size: 17px; z-index: 1; }
.badge.tg { left: 37px; top: 16px; width: 22px; height: 17px; line-height: 17px; border-radius: 5px; background: #f8403c; font-size: 12px; letter-spacing: -.4px; }
.badge.dc { left: 37px; top: 10px; width: 21px; height: 21px; line-height: 21px; background: #f05a5f; font-size: 14px; }
.tray { flex: 1; display: flex; align-items: center; padding: 0 30px 3px 35px; }
.chev { width: 16px; height: 10px; margin-right: 32px; }
.mic { width: 17px; height: 24px; margin-right: 27px; }
.wifi { width: 24px; height: 20px; margin-right: 11px; }
.vol { width: 25px; height: 22px; margin-right: 12px; }
.batt { width: 25px; height: 20px; overflow: visible; }
.clock { margin: 0 18px 0 auto; font-size: 17px; line-height: 24px; text-align: right; }
.clock span { letter-spacing: .27px; }
.count { width: 23px; height: 24px; border-radius: 12px; background: #2a8090; color: #fff; font-size: 15px; line-height: 24px; text-align: center; }
```
